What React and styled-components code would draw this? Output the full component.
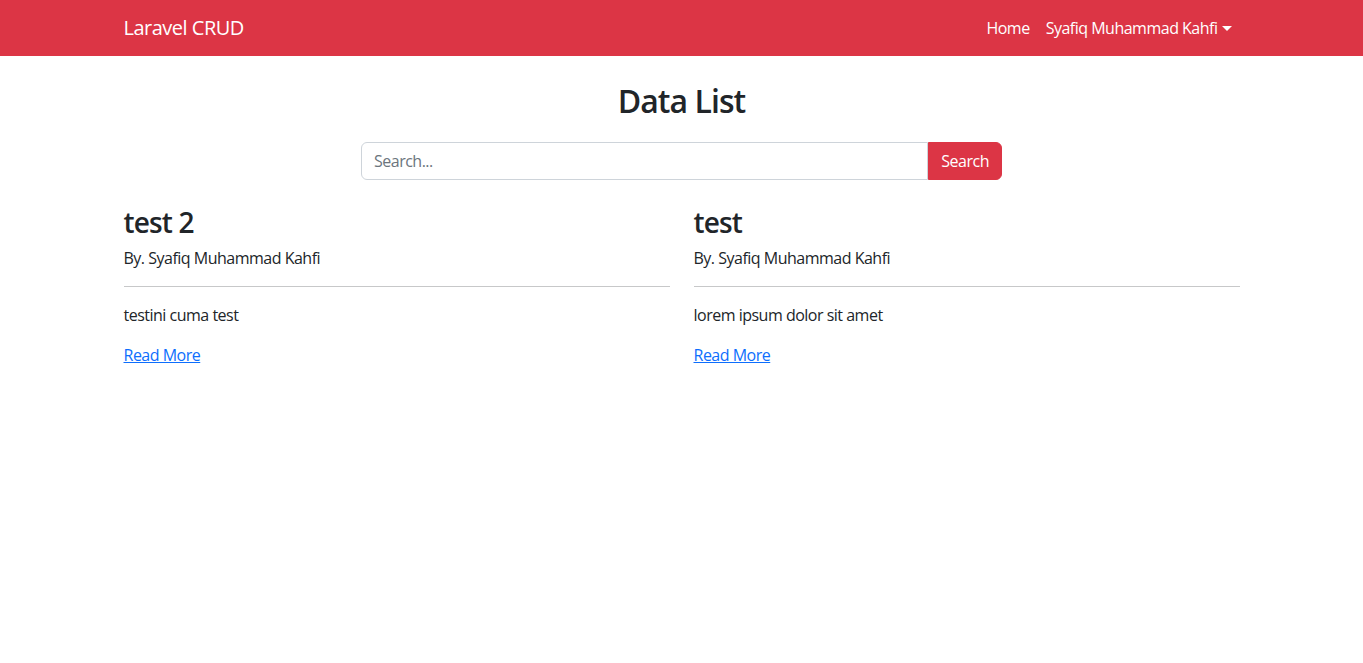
import React from "react";
import styled, { createGlobalStyle } from "styled-components";

const Global = createGlobalStyle`
  *, *::before, *::after { box-sizing: border-box; }
  body {
    margin: 0;
    font-family: "Open Sans", "Noto Sans", sans-serif;
    font-size: 16px;
    line-height: 1.5;
    letter-spacing: -0.5px;
    color: #212529;
    background: #fff;
  }
`;

const Navbar = styled.nav`
  background: #dc3545;
  padding: 8px 0;
`;

const Container = styled.div`
  width: 1140px;
  max-width: 100%;
  margin: 0 auto;
  padding: 0 12px;
`;

const NavInner = styled(Container)`
  display: flex;
  align-items: center;
  justify-content: space-between;
`;

const Brand = styled.a`
  font-size: 20px;
  line-height: 30px;
  padding: 5px 0;
  color: #fff;
  text-decoration: none;
`;

const NavList = styled.ul`
  display: flex;
  list-style: none;
  margin: 0;
  padding: 0;
`;

const NavLink = styled.a`
  display: block;
  padding: 8px;
  color: #fff;
  text-decoration: none;
  ${(p) =>
    p.$dropdown &&
    `
    &::after {
      content: "";
      display: inline-block;
      margin-left: 4px;
      vertical-align: 3px;
      border-top: 5px solid;
      border-right: 5px solid transparent;
      border-left: 5px solid transparent;
      border-bottom: 0;
    }
  `}
`;

const Main = styled(Container)`
  padding-top: 24px;
`;

const Title = styled.h2`
  margin: 0 0 22px;
  padding-top: 2px;
  text-align: center;
  font-size: 32px;
  font-weight: 600;
  letter-spacing: -0.03em;
  line-height: 1.2;
`;

const SearchForm = styled.form`
  display: flex;
  width: 641px;
  margin: 0 auto 24px;
`;

const SearchInput = styled.input`
  flex: 1;
  min-width: 0;
  height: 38px;
  padding: 6px 12px;
  font: inherit;
  letter-spacing: inherit;
  color: #212529;
  border: 1px solid #ced4da;
  border-radius: 6px 0 0 6px;
  outline: none;
  &::placeholder { color: #6c757d; }
`;

const SearchButton = styled.button`
  height: 38px;
  padding: 6px 12px;
  font: inherit;
  letter-spacing: inherit;
  color: #fff;
  background: #dc3545;
  border: 1px solid #dc3545;
  border-radius: 0 6px 6px 0;
`;

const Grid = styled.div`
  display: grid;
  grid-template-columns: 1fr 1fr;
  column-gap: 24px;
`;

const Post = styled.article``;

const PostTitle = styled.h3`
  margin: 0 0 6px;
  padding-top: 2px;
  font-size: 28px;
  font-weight: 600;
  letter-spacing: -0.03em;
  line-height: 1.2;
`;

const Text = styled.p`
  margin: 0 0 16px;
`;

const Rule = styled.hr`
  margin: 16px 0;
  border: 0;
  border-top: 1px solid #212529;
  opacity: 0.25;
`;

const ReadMore = styled.a`
  color: #0d6efd;
  text-decoration: underline;
`;

const posts = [
  { title: "test 2", author: "Syafiq Muhammad Kahfi", body: "testini cuma test" },
  { title: "test", author: "Syafiq Muhammad Kahfi", body: "lorem ipsum dolor sit amet" },
];

export default function App() {
  return (
    <>
      <Global />
      <Navbar>
        <NavInner>
          <Brand href="#">Laravel CRUD</Brand>
          <NavList>
            <li><NavLink href="#">Home</NavLink></li>
            <li><NavLink href="#" $dropdown>Syafiq Muhammad Kahfi</NavLink></li>
          </NavList>
        </NavInner>
      </Navbar>
      <Main>
        <Title>Data List</Title>
        <SearchForm onSubmit={(e) => e.preventDefault()}>
          <SearchInput placeholder="Search..." />
          <SearchButton type="submit">Search</SearchButton>
        </SearchForm>
        <Grid>
          {posts.map((p) => (
            <Post key={p.title}>
              <PostTitle>{p.title}</PostTitle>
              <Text>By. {p.author}</Text>
              <Rule />
              <Text>{p.body}</Text>
              <Text><ReadMore href="#">Read More</ReadMore></Text>
            </Post>
          ))}
        </Grid>
      </Main>
    </>
  );
}
